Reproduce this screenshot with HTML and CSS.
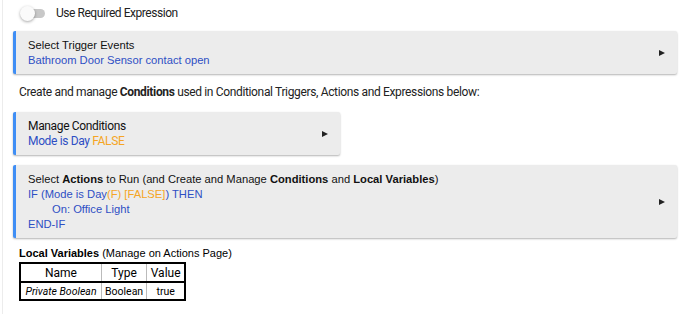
FILE: index.html
```html
<!DOCTYPE html>
<html lang="en">
<head>
    <meta charset="UTF-8">
    <title>Rule Setup</title>
    <link rel="stylesheet" href="styles.css">
</head>
<body>
    <div class="page">
        <div class="toggle-row">
            <span class="switch"><span class="knob"></span></span>
            <span class="toggle-label">Use Required Expression</span>
        </div>

        <div class="card card-wide">
            <div class="card-text">
                <div class="title">Select Trigger Events</div>
                <div class="blue">Bathroom Door Sensor contact open</div>
            </div>
            <span class="arrow"></span>
        </div>

        <p class="info">Create and manage <b>Conditions</b> used in Conditional Triggers, Actions and Expressions below:</p>

        <div class="card card-small">
            <div class="card-text roboto">
                <div class="title">Manage Conditions</div>
                <div class="blue">Mode is Day <span class="orange">FALSE</span></div>
            </div>
            <span class="arrow"></span>
        </div>

        <div class="card card-wide actions">
            <div class="card-text">
                <div class="title">Select <b>Actions</b> to Run (and Create and Manage <b>Conditions</b> and <b>Local Variables</b>)</div>
                <div class="blue">IF (Mode is Day<span class="orange">(F) [FALSE]</span>) THEN</div>
                <div class="blue indent">On: Office Light</div>
                <div class="blue">END-IF</div>
            </div>
            <span class="arrow"></span>
        </div>

        <div class="locals">
            <div class="locals-title"><b>Local Variables</b> (Manage on Actions Page)</div>
            <table class="vars">
                <tr><th class="c-name">Name</th><th class="c-type">Type</th><th class="c-value">Value</th></tr>
                <tr><td><i>Private Boolean</i></td><td>Boolean</td><td>true</td></tr>
            </table>
        </div>
    </div>
</body>
</html>
```

FILE: styles.css
```css
body {
    margin: 0;
    background: #ffffff;
    font-family: "Liberation Sans", Arial, sans-serif;
    color: #000;
}
.page {
    border-left: 1px solid #ececec;
    margin-left: 2px;
    padding: 5px 0 0 10px;
    min-height: 309px;
}
.toggle-row {
    display: flex;
    align-items: center;
    height: 16px;
    padding-left: 6px;
    margin-bottom: 1px;
}
.switch {
    position: relative;
    display: inline-block;
    width: 22px;
    height: 9px;
    margin-left: 4px;
    background: #c8c8c8;
    border-radius: 5px;
}
.knob {
    position: absolute;
    left: -3px;
    top: -3px;
    width: 15px;
    height: 15px;
    border-radius: 50%;
    background: #fafafa;
    box-shadow: 0 1px 3px rgba(0, 0, 0, 0.35);
}
.toggle-label {
    margin-left: 11px;
    font-family: Roboto, sans-serif;
    font-size: 12px;
    letter-spacing: -0.45px;
    color: #222;
}
.card {
    display: flex;
    align-items: center;
    background: #ececec;
    border-left: 3px solid #3f8ef5;
    border-radius: 2px;
    box-shadow: 0 1px 2px rgba(0, 0, 0, 0.3);
    box-sizing: border-box;
}
.card-wide {
    width: 664px;
    margin-top: 10px;
    height: 43px;
}
.card-small {
    width: 327px;
    height: 43px;
}
.actions {
    height: 73px;
    margin-top: 10px;
}
.card-text {
    flex: 1;
    padding-left: 12px;
    font-size: 11.2px;
    line-height: 15px;
}
.card-text .title {
    color: #111;
}
.roboto {
    font-family: Roboto, sans-serif;
    font-size: 12px;
    letter-spacing: -0.35px;
}
.blue {
    color: #2e4fc4;
}
.orange {
    color: #f5a524;
}
.indent {
    padding-left: 24px;
}
.arrow {
    width: 0;
    height: 0;
    border-top: 3.5px solid transparent;
    border-bottom: 3.5px solid transparent;
    border-left: 6px solid #222;
    margin-right: 12px;
}
.info {
    margin: 0;
    padding: 11px 0 13px 6px;
    font-family: Roboto, sans-serif;
    font-size: 12px;
    letter-spacing: -0.35px;
    color: #222;
}
.locals {
    padding: 9px 0 0 6px;
}
.locals-title {
    font-size: 11px;
    margin-bottom: 3px;
}
.vars {
    border-collapse: collapse;
    border: 2px solid #000;
    font-family: Roboto, sans-serif;
    white-space: nowrap;
}
.vars th {
    font-weight: normal;
    font-size: 12px;
    height: 17px;
    padding: 0 3px;
    border: 1px solid #bbb;
    border-bottom: 2px solid #000;
}
.vars td {
    height: 16px;
    padding: 0 3px;
    border: 1px solid #bbb;
    text-align: center;
    font-size: 10.5px;
}
.c-name { width: 74px; }
.c-type { width: 38px; }
.c-value { width: 31px; }
```
